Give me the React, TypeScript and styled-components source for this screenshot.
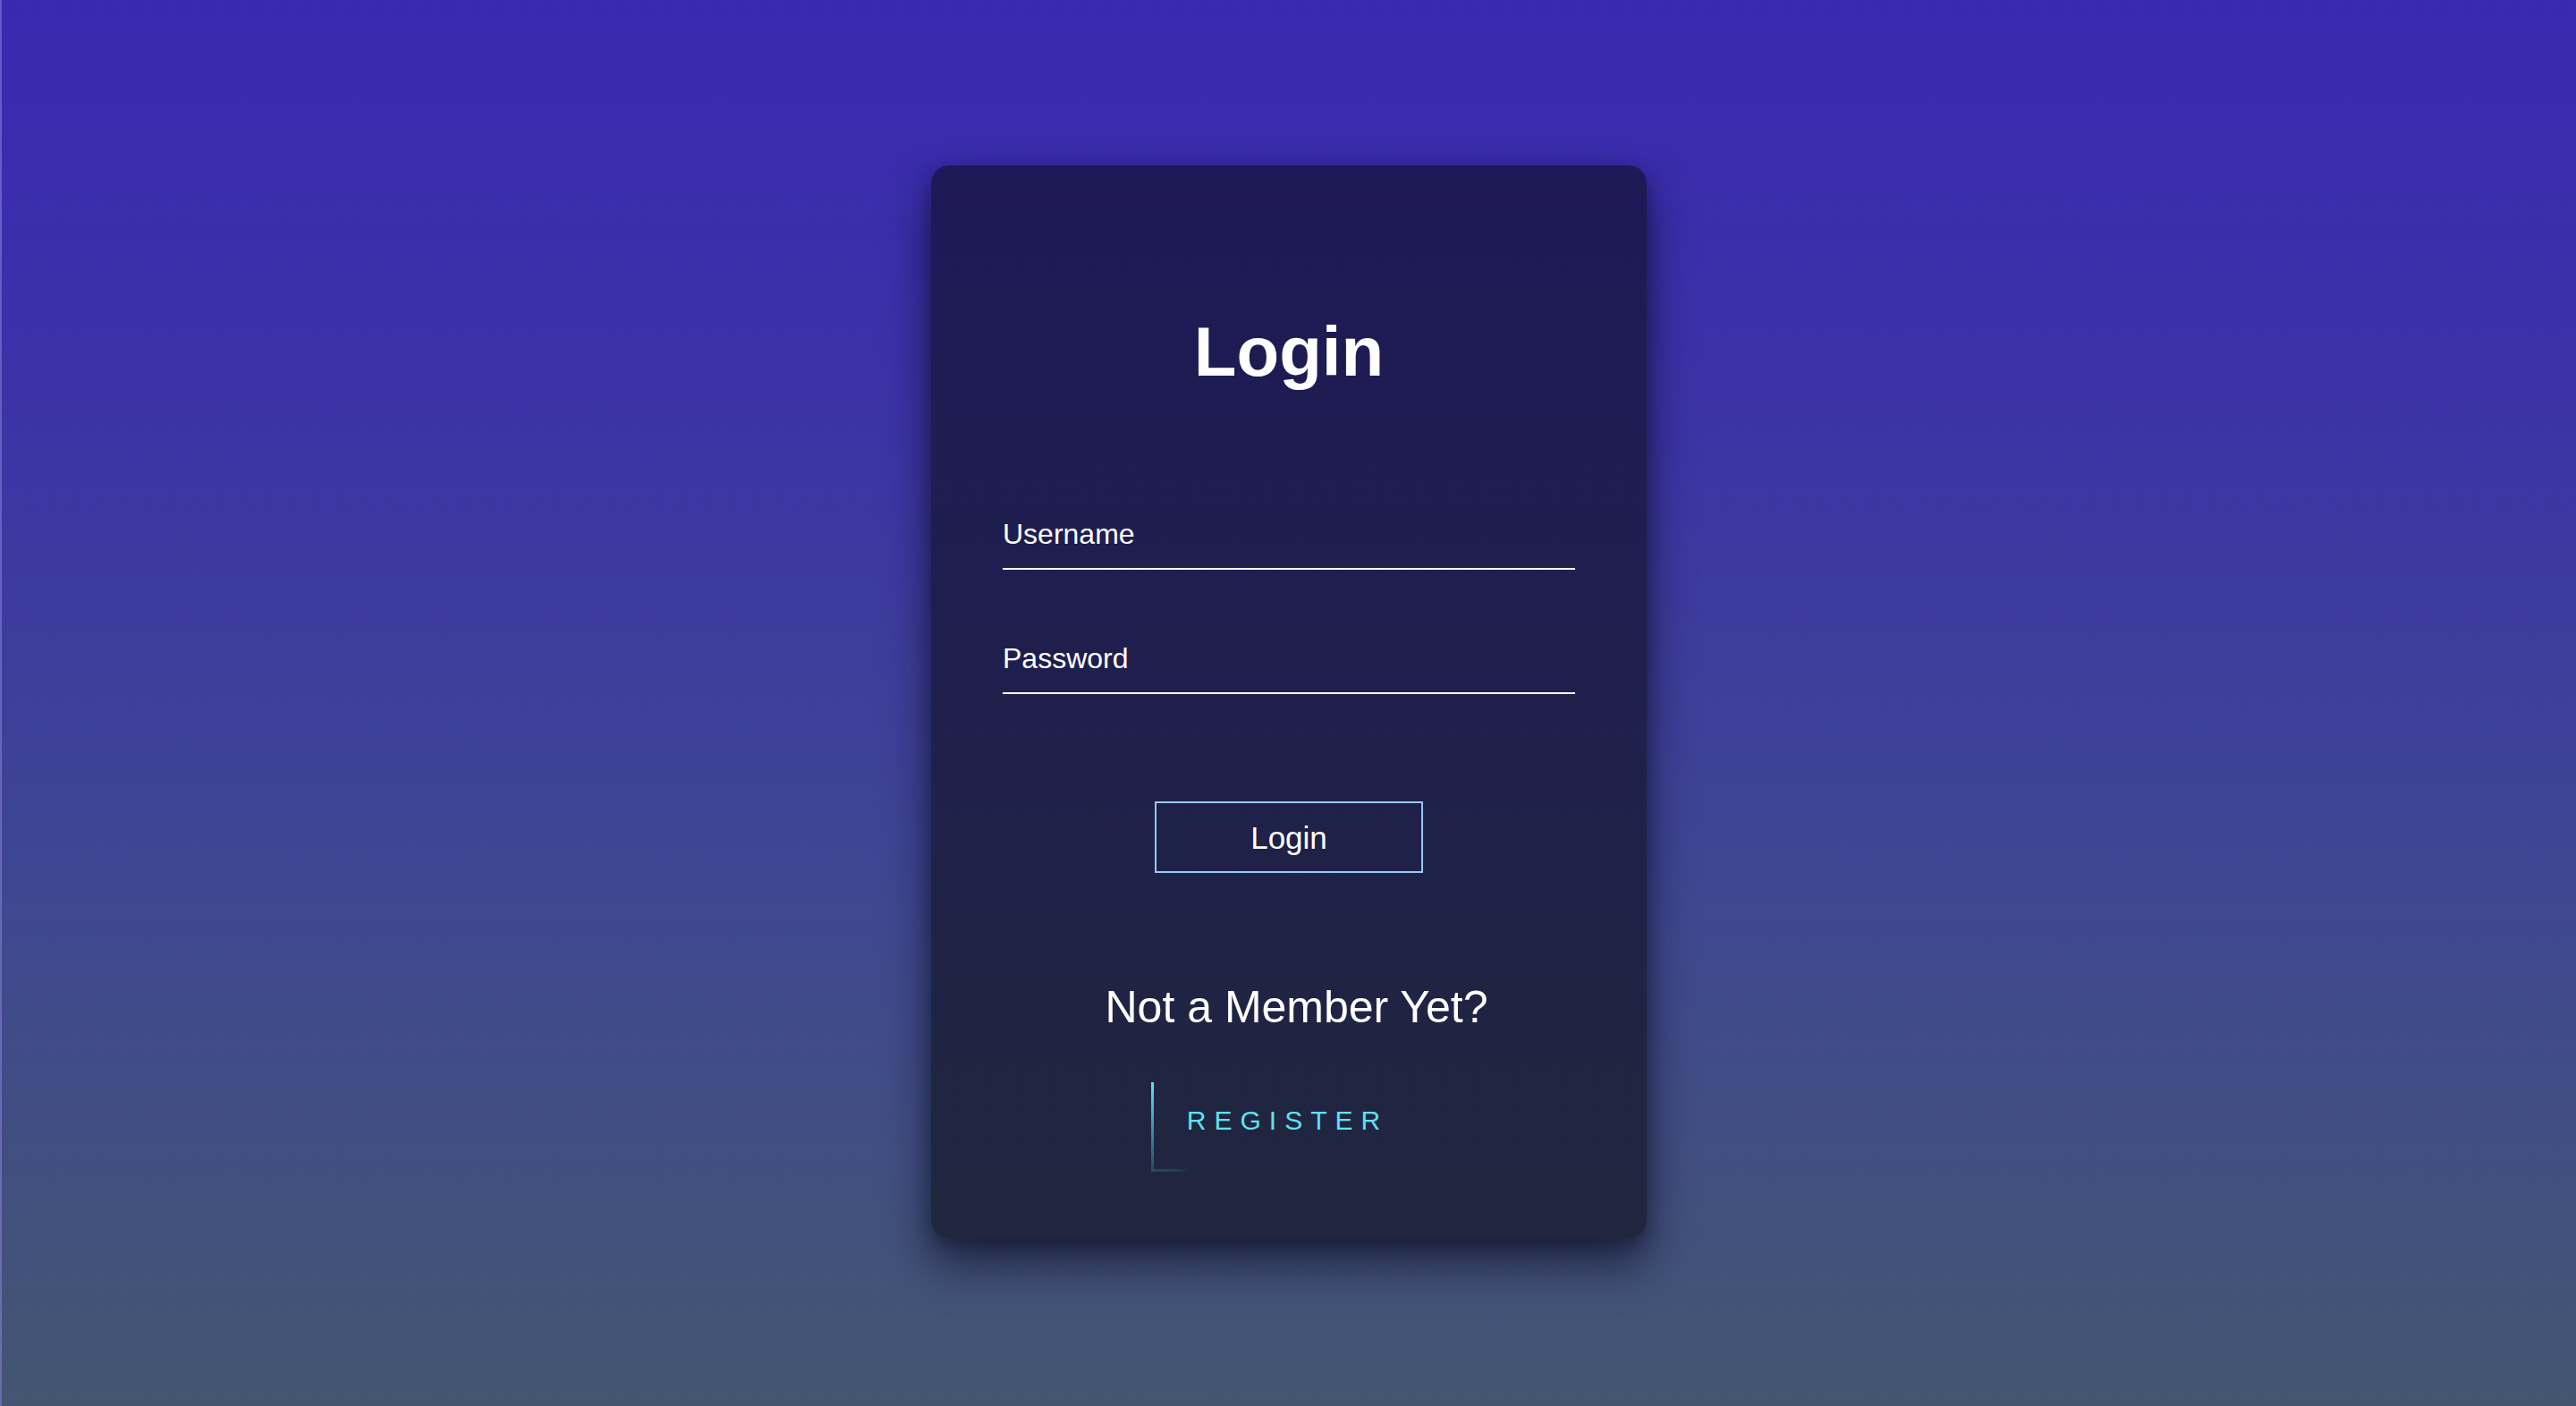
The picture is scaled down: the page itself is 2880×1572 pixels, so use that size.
import React from "react";
import styled, { createGlobalStyle } from "styled-components";

const Global = createGlobalStyle`
  html, body { margin: 0; padding: 0; }
  body {
    font-family: "Liberation Sans", Arial, Helvetica, sans-serif;
    background: #3a2ab0;
  }
  * { box-sizing: border-box; }
`;

const Page = styled.div`
  min-height: 1572px;
  width: 100%;
  display: flex;
  justify-content: center;
  align-items: flex-start;
  padding-top: 185px;
  background: linear-gradient(to bottom, #3929b1 0%, #3b34a6 30%, #3f4890 65%, #445671 100%);
  border-left: 2px solid rgba(140, 130, 220, 0.55);
`;

const Card = styled.div`
  width: 800px;
  height: 1200px;
  padding: 169px 80px 75px;
  border-radius: 20px;
  background: linear-gradient(to bottom, #1e1957 0%, #1f1f4e 45%, #20273d 100%);
  box-shadow: 0 28px 50px rgba(12, 14, 36, 0.65), 0 6px 18px rgba(12, 14, 36, 0.35);
  display: flex;
  flex-direction: column;
  align-items: center;
`;

const Title = styled.h1`
  margin: 0;
  font-size: 78px;
  line-height: 1;
  font-weight: 700;
  color: #ffffff;
`;

const Form = styled.form`
  width: 100%;
  display: flex;
  flex-direction: column;
  align-items: center;
`;

const Field = styled.div<{ $gap: number }>`
  position: relative;
  width: 100%;
  height: 58px;
  margin-top: ${(p) => p.$gap}px;
`;

const Input = styled.input`
  width: 100%;
  height: 100%;
  padding: 0;
  background: transparent;
  border: none;
  border-bottom: 2px solid #ffffff;
  outline: none;
  color: #ffffff;
  font-family: inherit;
  font-size: 32px;
`;

const Label = styled.label`
  position: absolute;
  left: 0;
  top: 2px;
  font-size: 32px;
  line-height: 1;
  color: #ffffff;
  pointer-events: none;
`;

const Button = styled.button`
  margin-top: 120px;
  width: 300px;
  height: 80px;
  background: transparent;
  border: 2px solid #98c8f8;
  color: #ffffff;
  font-family: "Liberation Sans", Arial, sans-serif;
  font-size: 35px;
  line-height: 1;
  cursor: pointer;
`;

const Subtitle = styled.h2`
  margin: 125px 0 0;
  padding-left: 17px;
  font-size: 50px;
  line-height: 1;
  font-weight: 400;
  color: #ffffff;
`;

const RegisterLink = styled.a`
  position: relative;
  margin-top: 59px;
  height: 100px;
  padding: 28px 43px 42px 40px;
  font-size: 30px;
  line-height: 1;
  letter-spacing: 9px;
  color: #5fe2ee;
  text-decoration: none;
  cursor: pointer;
`;

const EdgeLeft = styled.span`
  position: absolute;
  left: 0;
  top: 0;
  width: 3px;
  height: 100%;
  background: linear-gradient(to bottom, #5fe2ee 0%, #3f96a6 50%, #2b4658 100%);
`;

const EdgeBottom = styled.span`
  position: absolute;
  left: 0;
  bottom: 0;
  width: 42px;
  height: 3px;
  background: linear-gradient(to right, #2d4b5c 0%, rgba(45, 75, 92, 0.6) 70%, rgba(45, 75, 92, 0) 100%);
`;

export default function App() {
  return (
    <>
      <Global />
      <Page>
        <Card>
          <Title>Login</Title>
          <Form onSubmit={(e) => e.preventDefault()}>
            <Field $gap={147}>
              <Input id="username" type="text" />
              <Label htmlFor="username">Username</Label>
            </Field>
            <Field $gap={81}>
              <Input id="password" type="password" />
              <Label htmlFor="password">Password</Label>
            </Field>
            <Button type="submit">Login</Button>
          </Form>
          <Subtitle>Not a Member Yet?</Subtitle>
          <RegisterLink>
            <EdgeLeft />
            <EdgeBottom />
            REGISTER
          </RegisterLink>
        </Card>
      </Page>
    </>
  );
}
